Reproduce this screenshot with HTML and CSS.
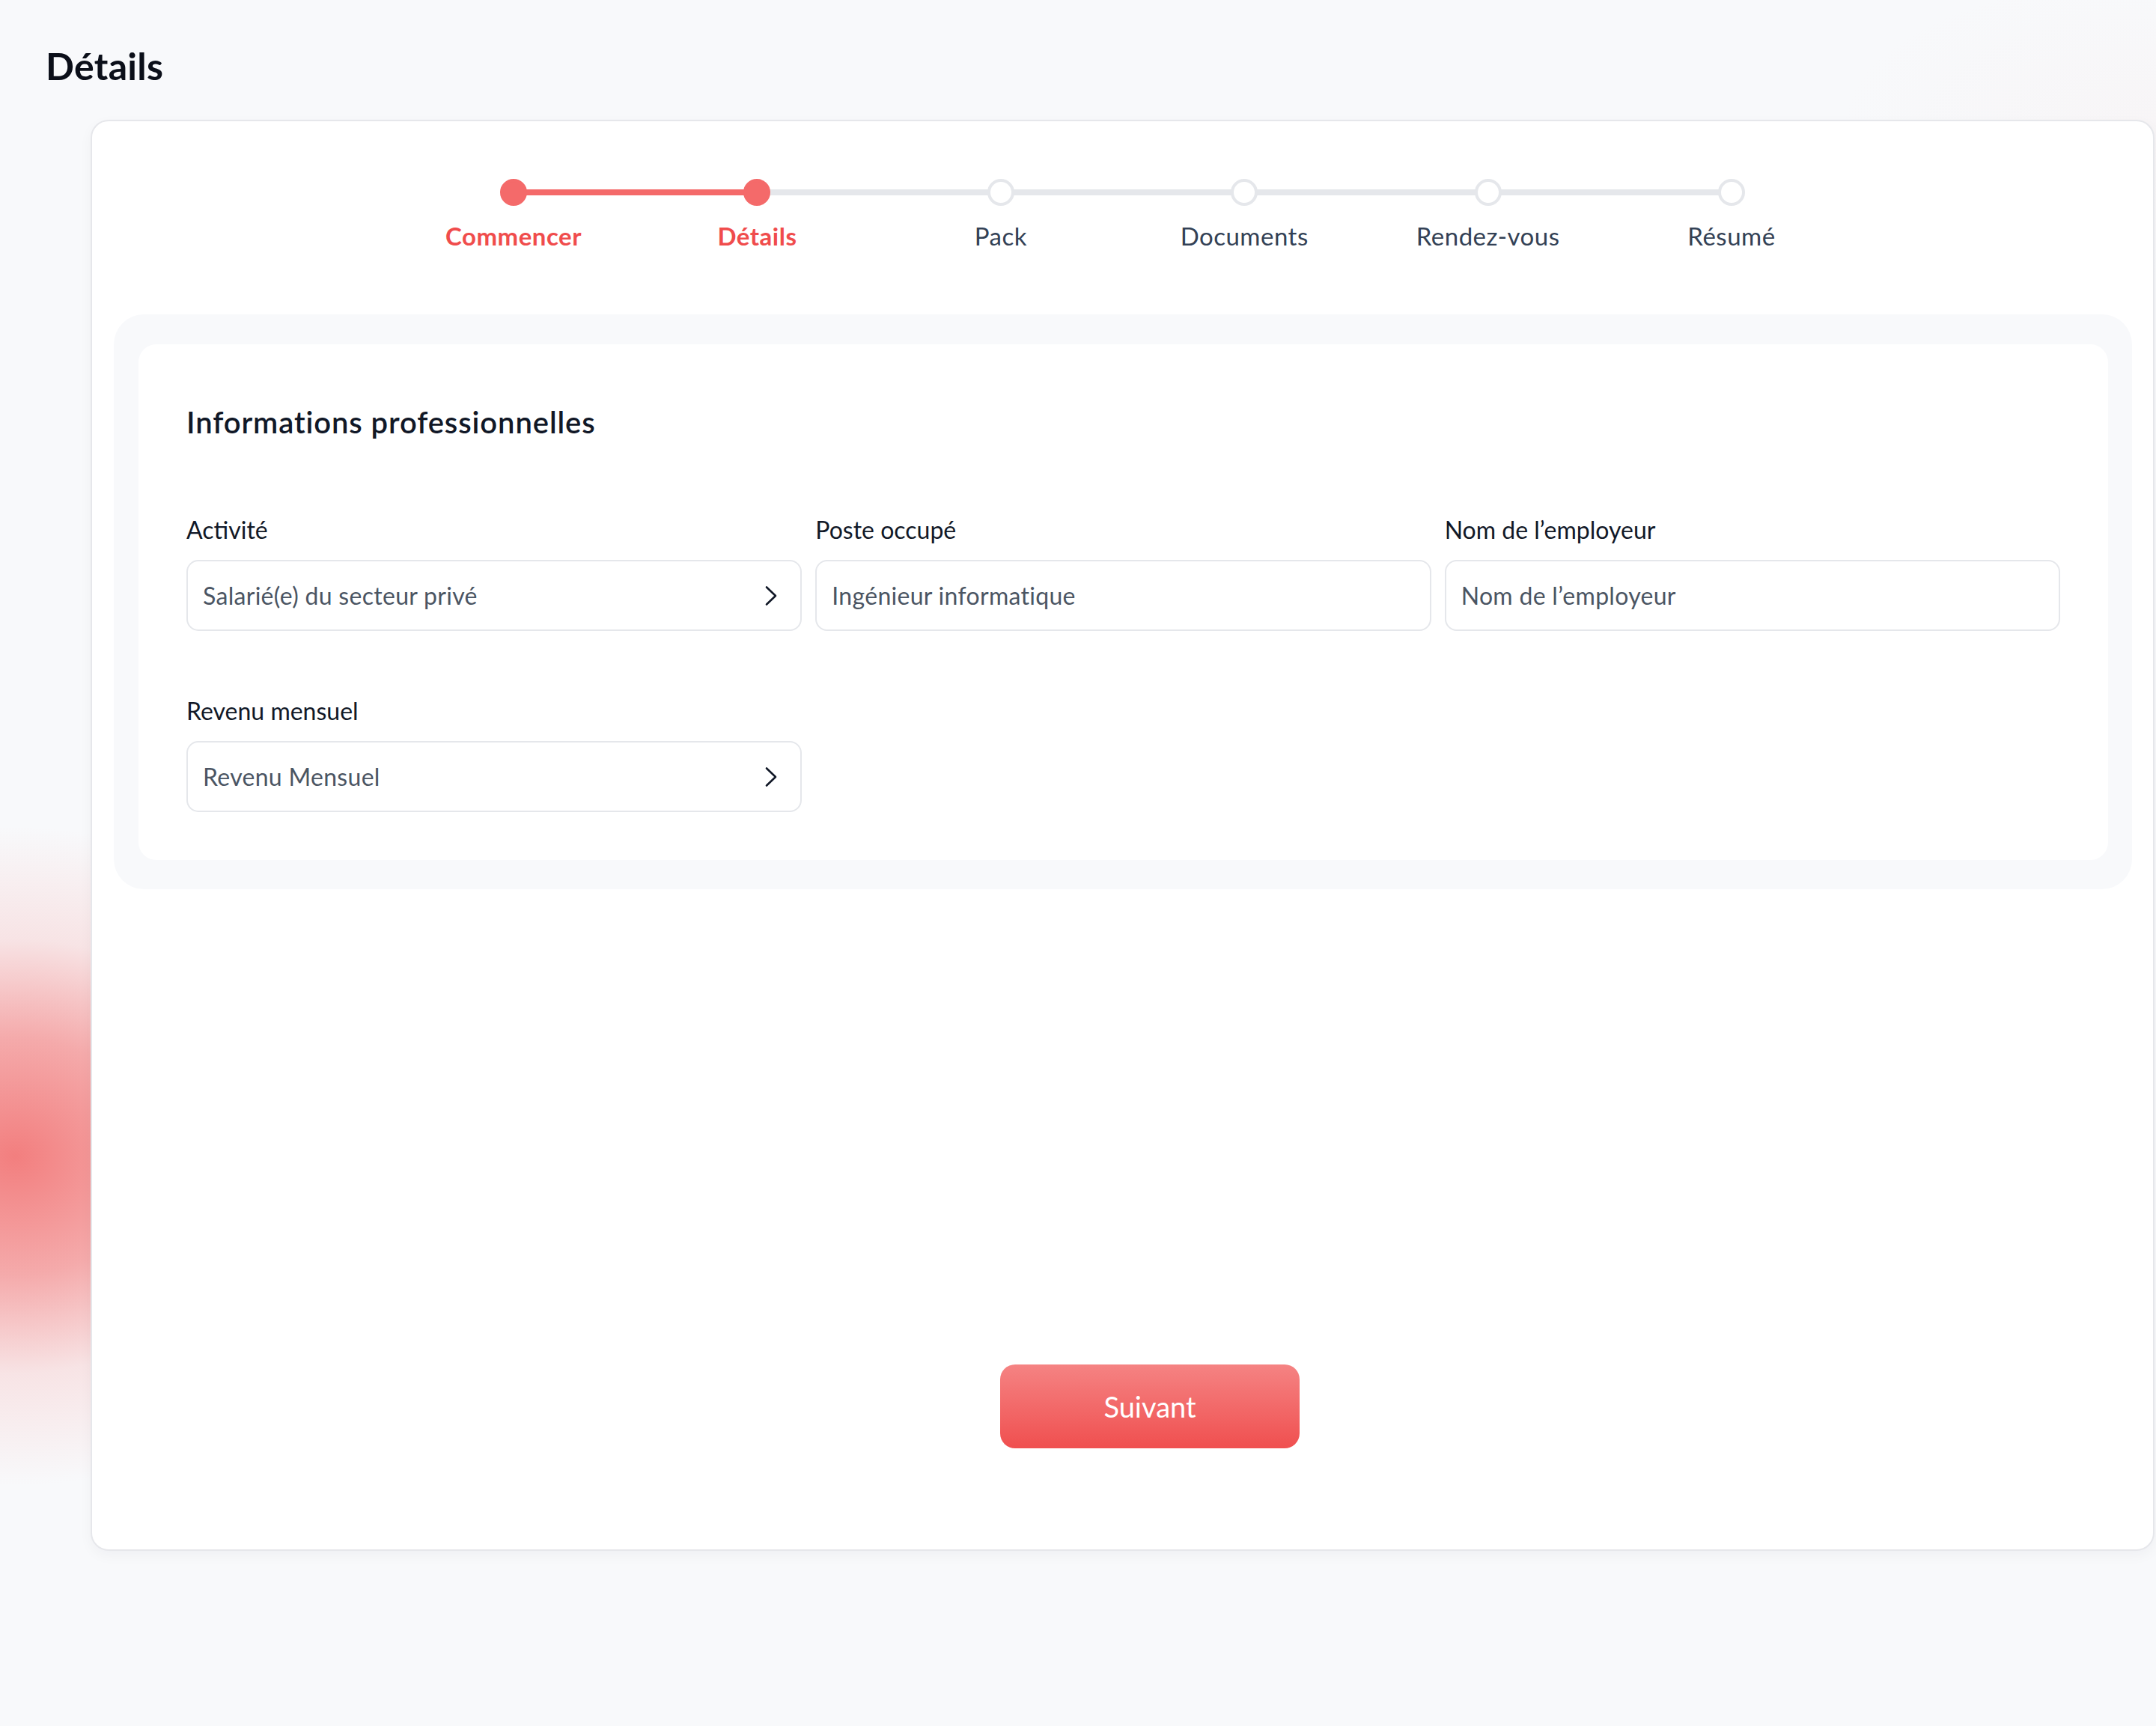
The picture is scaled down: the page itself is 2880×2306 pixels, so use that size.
FILE: index.html
```html
<!DOCTYPE html>
<html lang="fr">
<head>
<meta charset="utf-8">
<title>Détails</title>
<link rel="stylesheet" href="styles.css">
</head>
<body>
<div class="page">
  <h1 class="page-title">Détails</h1>
  <main class="card">
    <ol class="stepper">
      <li class="step done"><span class="dot"></span><span class="step-label">Commencer</span></li>
      <li class="step current"><span class="dot"></span><span class="step-label">Détails</span></li>
      <li class="step"><span class="dot"></span><span class="step-label">Pack</span></li>
      <li class="step"><span class="dot"></span><span class="step-label">Documents</span></li>
      <li class="step"><span class="dot"></span><span class="step-label">Rendez-vous</span></li>
      <li class="step last"><span class="dot"></span><span class="step-label">Résumé</span></li>
    </ol>

    <section class="panel-outer">
      <div class="panel">
        <h2 class="panel-title">Informations professionnelles</h2>
        <div class="form-grid">
          <div class="field">
            <label class="field-label">Activité</label>
            <div class="input select">
              <span class="input-text">Salarié(e) du secteur privé</span>
              <svg class="chevron" width="18" height="28" viewBox="0 0 18 28" aria-hidden="true"><path d="M3 2.5 L15 14 L3 25.5" fill="none" stroke="#111827" stroke-width="2.6" stroke-linecap="round" stroke-linejoin="round"/></svg>
            </div>
          </div>
          <div class="field">
            <label class="field-label">Poste occupé</label>
            <div class="input">
              <span class="input-text">Ingénieur informatique</span>
            </div>
          </div>
          <div class="field">
            <label class="field-label">Nom de l’employeur</label>
            <div class="input">
              <span class="input-text">Nom de l’employeur</span>
            </div>
          </div>
          <div class="field">
            <label class="field-label">Revenu mensuel</label>
            <div class="input select">
              <span class="input-text">Revenu Mensuel</span>
              <svg class="chevron" width="18" height="28" viewBox="0 0 18 28" aria-hidden="true"><path d="M3 2.5 L15 14 L3 25.5" fill="none" stroke="#111827" stroke-width="2.6" stroke-linecap="round" stroke-linejoin="round"/></svg>
            </div>
          </div>
        </div>
      </div>
    </section>

    <div class="actions">
      <button class="btn-primary" type="button">Suivant</button>
    </div>
  </main>
</div>
</body>
</html>
```

FILE: styles.css
```css
* { box-sizing: border-box; }

html, body {
  margin: 0;
  padding: 0;
}

body {
  min-height: 2306px;
  font-family: "Lato", "Liberation Sans", sans-serif;
  color: #111827;
  background-color: #f8f9fb;
  background-image:
    radial-gradient(ellipse 520px 440px at 20px 1545px, rgba(242, 120, 120, 0.95) 0%, rgba(243, 128, 128, 0.65) 36%, rgba(246, 178, 178, 0.3) 66%, rgba(248, 249, 251, 0) 100%),
    radial-gradient(ellipse 420px 200px at 2880px 170px, rgba(244, 226, 226, 0.18) 0%, rgba(248, 249, 251, 0) 100%);
  background-repeat: no-repeat;
}

.page {
  padding: 0 2px 0 0;
}

.page-title {
  margin: 0;
  padding: 63px 0 0 61px;
  font-size: 50px;
  line-height: 50px;
  font-weight: 700;
  color: #0b0f19;
  letter-spacing: 0.3px;
}

.card {
  margin: 47px 0 0 121px;
  height: 1912px;
  background: #ffffff;
  border: 2px solid #e6e7eb;
  border-radius: 24px;
  box-shadow: 0 6px 18px rgba(17, 24, 39, 0.04);
  display: flex;
  flex-direction: column;
}

/* Stepper */
.stepper {
  list-style: none;
  margin: 77px auto 0;
  padding: 0;
  display: grid;
  grid-template-columns: repeat(6, 325.4px);
}

.step {
  position: relative;
  display: flex;
  flex-direction: column;
  align-items: center;
}

.step::after {
  content: "";
  position: absolute;
  top: 14px;
  left: 50%;
  width: 100%;
  height: 8px;
  background: #e5e7eb;
  z-index: 0;
}

.step.done::after { background: #f46a6a; }
.step.last::after { display: none; }

.dot {
  position: relative;
  z-index: 1;
  width: 36px;
  height: 36px;
  border-radius: 50%;
  background: #ffffff;
  border: 4px solid #e5e7eb;
}

.step.done .dot,
.step.current .dot {
  background: #f46a6a;
  border-color: #f46a6a;
}

.step-label {
  margin-top: 20px;
  font-size: 33px;
  line-height: 40px;
  letter-spacing: 0.5px;
  color: #334155;
  font-weight: 400;
}

.step.done .step-label,
.step.current .step-label {
  color: #f04c4c;
  font-weight: 700;
}

/* Panel */
.panel-outer {
  margin: 85px 28px 0 29px;
  padding: 40px 32px 39px 33px;
  background: #f8f9fb;
  border-radius: 40px;
}

.panel {
  background: #ffffff;
  border-radius: 24px;
  padding: 64px 64px 64px 64px;
}

.panel-title {
  margin: 20px 0 104px;
  font-size: 40px;
  line-height: 40px;
  font-weight: 600;
  letter-spacing: 0.9px;
  color: #111827;
}

.form-grid {
  display: grid;
  grid-template-columns: repeat(3, 1fr);
  column-gap: 18px;
  row-gap: 87px;
}

.field {
  display: flex;
  flex-direction: column;
}

.field-label {
  font-size: 32px;
  line-height: 40px;
  color: #111827;
  margin-bottom: 20px;
}

.input {
  height: 95px;
  border: 2px solid #e5e7eb;
  border-radius: 16px;
  display: flex;
  align-items: center;
  justify-content: space-between;
  padding: 0 30px 0 20px;
}

.input-text {
  font-size: 32px;
  line-height: 40px;
  letter-spacing: 0.3px;
  font-weight: 400;
  color: #4b5563;
}

.chevron {
  flex: none;
}

/* Actions */
.actions {
  margin-top: auto;
  margin-bottom: 135px;
  display: flex;
  justify-content: center;
  padding-left: 73px;
}

.btn-primary {
  width: 400px;
  height: 112px;
  border: none;
  border-radius: 20px;
  background: linear-gradient(180deg, #f58383 0%, #f26767 55%, #f04f4f 100%);
  color: #ffffff;
  font-family: "Lato", "Liberation Sans", sans-serif;
  font-size: 38px;
  font-weight: 400;
  cursor: pointer;
}
```
